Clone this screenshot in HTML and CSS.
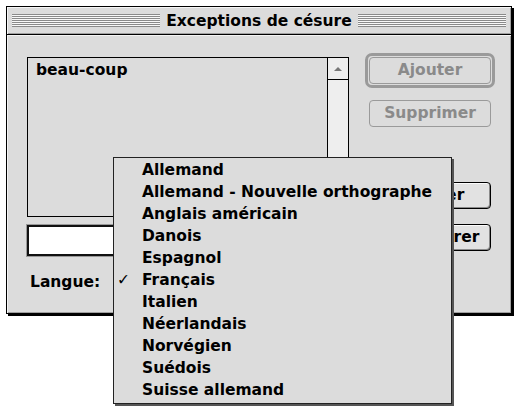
FILE: index.html
```html
<!DOCTYPE html>
<html lang="fr">
<head>
    <meta charset="UTF-8">
    <title>Exceptions de césure</title>
    <link rel="stylesheet" href="styles.css">
</head>
<body>

<div class="window">
    <div class="titlebar">
        <div class="stripes"></div>
        <div class="title">Exceptions de césure</div>
        <div class="stripes"></div>
    </div>

    <div class="content">
        <div class="left">
            <div class="listbox">
                <div class="list-items">
                    <div class="list-item">beau-coup</div>
                </div>
                <div class="scrollbar">
                    <div class="arrow-up"><div class="triangle"></div></div>
                </div>
            </div>
            <div class="field"></div>
            <div class="lang-row">
                <span class="label">Langue:</span>
                <!-- le popup est caché par son menu ouvert -->
                <div class="popup"></div>
            </div>
        </div>

        <div class="right">
            <div class="default-ring">
                <div class="btn disabled">Ajouter</div>
            </div>
            <div class="btn disabled btn-supprimer">Supprimer</div>
            <div class="btn btn-annuler">Annuler</div>
            <div class="btn btn-enregistrer">Enregistrer</div>
        </div>
    </div>
</div>

<!-- menu ouvert du popup Langue -->
<div class="menu">
    <div class="menu-item"><span class="check"></span>Allemand</div>
    <div class="menu-item"><span class="check"></span>Allemand - Nouvelle orthographe</div>
    <div class="menu-item"><span class="check"></span>Anglais américain</div>
    <div class="menu-item"><span class="check"></span>Danois</div>
    <div class="menu-item"><span class="check"></span>Espagnol</div>
    <div class="menu-item"><span class="check">✓</span>Français</div>
    <div class="menu-item"><span class="check"></span>Italien</div>
    <div class="menu-item"><span class="check"></span>Néerlandais</div>
    <div class="menu-item"><span class="check"></span>Norvégien</div>
    <div class="menu-item"><span class="check"></span>Suédois</div>
    <div class="menu-item"><span class="check"></span>Suisse allemand</div>
</div>

</body>
</html>
```

FILE: styles.css
```css
/* fenêtre style Mac OS 8 */
html, body {
    margin: 0;
    background: #ffffff;
}

body {
    width: 517px;
    height: 407px;
    padding: 6px;
    box-sizing: border-box;
    position: relative;
    overflow: hidden;
    font: bold 15.5px/22px "DejaVu Sans", sans-serif;
    color: #000;
}

.window {
    width: 506px;
    height: 308px;
    box-sizing: border-box;
    border: 1px solid #000;
    box-shadow: 2px 2px 0 #000;
    background: #dcdcdc;
}

.titlebar {
    height: 27px;
    border-bottom: 1px solid #000;
    display: flex;
    align-items: center;
    gap: 6px;
    padding: 0 5px;
    background: #dcdcdc;
    box-shadow: inset 1px 1px 0 #f6f6f6, inset -1px -1px 0 #a0a0a0;
}

.stripes {
    flex: 1;
    height: 13px;
    background: repeating-linear-gradient(to bottom, #8a8a8a 0 1px, #f8f8f8 1px 2px);
}

.title {
    flex: none;
}

.content {
    height: 278px;
    box-sizing: border-box;
    padding: 18px 15px 0 20px;
    display: grid;
    grid-template-columns: 322px 130px;
    column-gap: 16px;
    align-items: start;
    box-shadow: inset 1px 1px 0 #f4f4f4, inset -1px -1px 0 #a0a0a0;
}

.left {
    margin-top: 4px;
}

.listbox {
    height: 160px;
    box-sizing: border-box;
    border: 1px solid #000;
    display: flex;
}

.list-items {
    flex: 1;
    padding: 1px 8px;
}

.scrollbar {
    width: 20px;
    border-left: 1px solid #000;
    background: #eeeeee;
}

.arrow-up {
    height: 21px;
    border-bottom: 1px solid #000;
    display: flex;
    align-items: center;
    justify-content: center;
}

.triangle {
    width: 0;
    height: 0;
    border-left: 4px solid transparent;
    border-right: 4px solid transparent;
    border-bottom: 4px solid #777;
}

.field {
    margin-top: 8px;
    height: 31px;
    box-sizing: border-box;
    border: 2px solid #111;
    background: #fff;
    box-shadow: 0 0 0 1px #999;
}

.lang-row {
    margin-top: 15px;
    padding-left: 3px;
    display: flex;
    align-items: center;
    gap: 20px;
}

.popup {
    width: 180px;
    height: 22px;
}

.right {
    display: flex;
    flex-direction: column;
}

.default-ring {
    border: 3px solid #9a9a9a;
    border-radius: 7px;
    padding: 1px;
}

.btn {
    height: 27px;
    box-sizing: border-box;
    border: 1px solid #000;
    border-radius: 4px;
    text-align: center;
    line-height: 25px;
    background: #e2e2e2;
    box-shadow: inset 1px 1px 0 #fbfbfb, inset -1px -1px 0 #8a8a8a;
}

.btn.disabled {
    border-color: #9a9a9a;
    color: #8a8a8a;
    background: #dcdcdc;
    box-shadow: none;
}

.btn-supprimer,
.btn-annuler,
.btn-enregistrer {
    margin: 0 4px;
}

.btn-supprimer {
    margin-top: 12px;
}

.btn-annuler {
    margin-top: 55px;
}

.btn-enregistrer {
    margin-top: 15px;
}

.menu {
    position: absolute;
    left: 113px;
    top: 157px;
    width: 339px;
    box-sizing: border-box;
    padding: 1px 0 2px;
    border: 1px solid #222;
    box-shadow: 2px 2px 0 #555;
    background: #dcdcdc;
}

.menu-item {
    height: 22px;
    display: flex;
    white-space: nowrap;
}

.check {
    width: 28px;
    flex: none;
    box-sizing: border-box;
    padding-left: 3px;
    font-weight: normal;
}
```
